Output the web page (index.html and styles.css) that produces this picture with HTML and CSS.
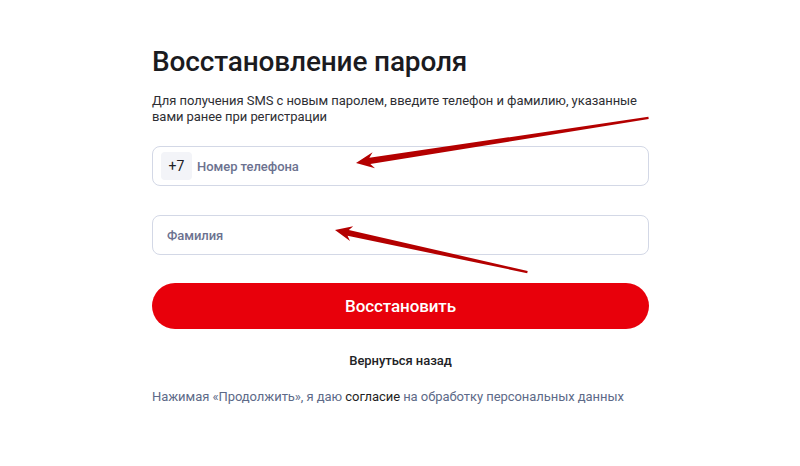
FILE: index.html
```html
<!DOCTYPE html>
<html lang="ru">
<head>
<meta charset="utf-8">
<title>Восстановление пароля</title>
<link rel="stylesheet" href="styles.css">
</head>
<body>
<main class="page">
  <section class="form">
    <h1 class="title">Восстановление пароля</h1>
    <p class="desc">Для получения SMS с новым паролем, введите телефон и фамилию, указанные вами ранее при регистрации</p>
    <div class="field field-phone">
      <span class="prefix">+7</span>
      <input class="input" type="text" placeholder="Номер телефона">
    </div>
    <div class="field field-name">
      <input class="input" type="text" placeholder="Фамилия">
    </div>
    <button class="submit" type="button">Восстановить</button>
    <a class="back" href="#">Вернуться назад</a>
    <p class="consent">Нажимая «Продолжить», я даю <a class="consent-link" href="#">согласие</a> на обработку персональных данных</p>
  </section>
  <svg class="arrows" width="800" height="466" viewBox="0 0 800 466" aria-hidden="true">
    <polygon class="arrow" transform="translate(356 163) rotate(-8.76)" points="0,0 18,-8 14,-3.2 296,-1.1 296,1.1 14,3.2 18,8"/>
    <polygon class="arrow" transform="translate(335 230) rotate(12.34)" points="0,0 17,-7.5 13.5,-3 197,-1.1 197,1.1 13.5,3 17,7.5"/>
  </svg>
</main>
</body>
</html>
```
FILE: styles.css
```css
* { box-sizing: border-box; }
html, body { margin: 0; padding: 0; background: #fff; }
body { font-family: Roboto, "Noto Sans", Arial, sans-serif; color: #1c1c1e; }
.page { position: relative; width: 800px; height: 466px; overflow: hidden; }
.form {
  width: 497px;
  margin-left: 152px;
  padding-top: 45px;
  display: flex;
  flex-direction: column;
}
.title {
  margin: 0;
  font-size: 28px;
  line-height: 34px;
  font-weight: 500;
  color: #1b1b1f;
  letter-spacing: -0.15px;
}
.desc {
  margin: 14px 0 0;
  font-size: 13px;
  line-height: 16px;
  color: #2e2e33;
  letter-spacing: -0.06px;
}
.field {
  display: flex;
  align-items: center;
  height: 40px;
  border: 1px solid #d3d8e6;
  border-radius: 8px;
  background: #fff;
}
.field-phone { margin-top: 21px; padding-left: 8px; }
.field-name { margin-top: 29px; padding-left: 14px; }
.prefix {
  display: flex;
  align-items: center;
  justify-content: center;
  width: 31px;
  height: 28px;
  border-radius: 4px;
  background: #f3f4f8;
  font-size: 14px;
  color: #202024;
  margin-right: 5px;
}
.input {
  flex: 1;
  border: 0;
  outline: 0;
  background: transparent;
  font-family: inherit;
  font-size: 13px;
  font-weight: 500;
  color: #1c1c1e;
  padding: 0;
  height: 100%;
  letter-spacing: -0.05px;
}
.input::placeholder { color: #6c7290; opacity: 1; }
.submit {
  margin-top: 28px;
  height: 46px;
  border: 0;
  border-radius: 23px;
  background: #e8000b;
  color: #fff;
  font-family: inherit;
  font-size: 17px;
  font-weight: 500;
  letter-spacing: -0.1px;
  cursor: pointer;
}
.back {
  margin-top: 24px;
  align-self: center;
  font-size: 13px;
  line-height: 16px;
  font-weight: 500;
  color: #222226;
  text-decoration: none;
  letter-spacing: -0.05px;
}
.consent {
  margin: 20px 0 0;
  font-size: 13px;
  line-height: 16px;
  color: #5d6a88;
  letter-spacing: -0.06px;
}
.consent-link { color: #1f1f23; text-decoration: none; }
.arrows { position: absolute; left: 0; top: 0; pointer-events: none; }
.arrow { fill: #b40000; }
```
